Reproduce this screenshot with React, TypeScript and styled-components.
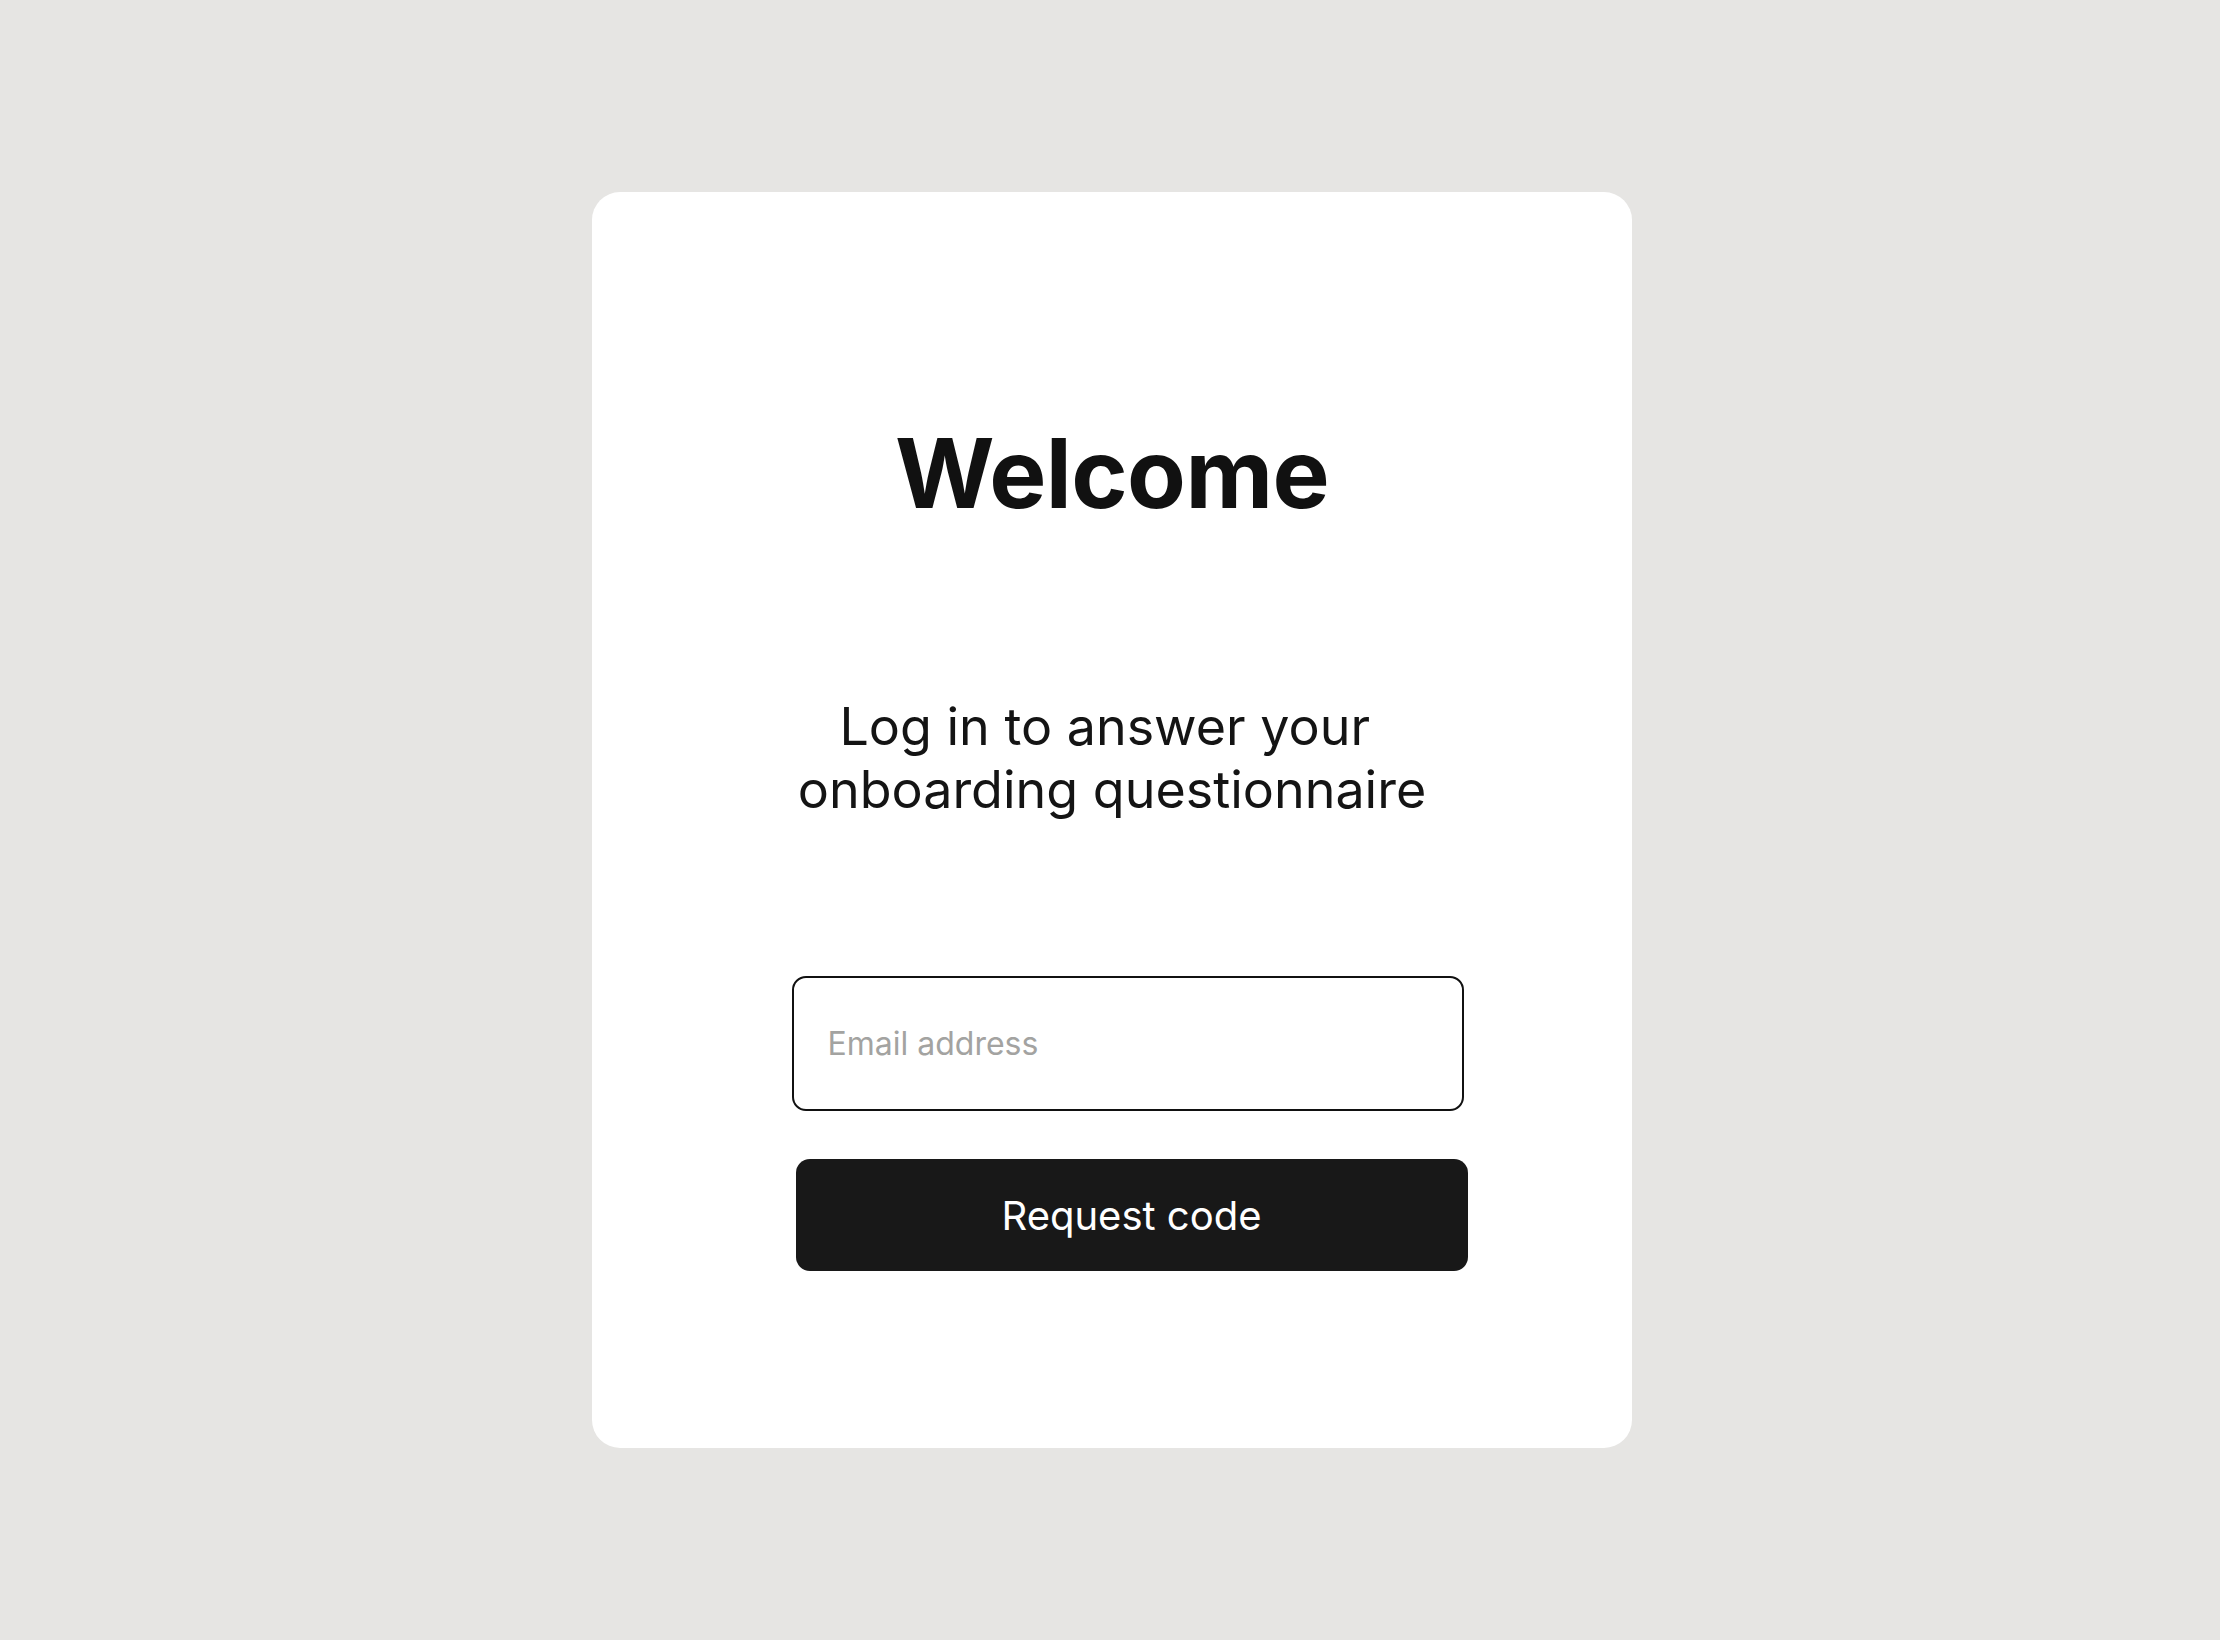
import styled, { createGlobalStyle } from "styled-components";

const GlobalStyle = createGlobalStyle`
    html, body {
        margin: 0;
        padding: 0;
        background: #e6e5e3;
        font-family: Inter, "Noto Sans", "Liberation Sans", sans-serif;
    }
    * {
        box-sizing: border-box;
    }
`;

const Page = styled.div`
    min-height: 100vh;
    display: flex;
    align-items: center;
    justify-content: center;
    background: #e6e5e3;
`;

const Card = styled.div`
    width: 1040px;
    height: 1256px;
    margin-left: 4px;
    background: #fff;
    border-radius: 28px;
    display: flex;
    flex-direction: column;
    align-items: center;
    padding-top: 223px;
`;

const Title = styled.h1`
    margin: 0;
    font-size: 96px;
    font-weight: 700;
    line-height: 116px;
    color: #111;
    letter-spacing: -0.6px;
`;

const SubTitle = styled.p`
    margin: 164px 0 0;
    font-size: 52px;
    font-weight: 400;
    line-height: 63px;
    color: #141414;
    text-align: center;
`;

const Form = styled.form`
    margin-top: 155px;
    margin-left: 35px;
    width: 676px;
    display: flex;
    flex-direction: column;
    gap: 48px;
`;

const EmailInput = styled.input`
    width: 672px;
    height: 135px;
    border: 2px solid #111;
    border-radius: 14px;
    padding: 0 34px;
    font-family: inherit;
    font-size: 32px;
    color: #111;
    background: #fff;
    outline: none;
    &::placeholder {
        color: #a3a3a1;
    }
`;

const SubmitButton = styled.button`
    width: 672px;
    height: 112px;
    margin-left: 4px;
    border: none;
    border-radius: 14px;
    background: #181818;
    color: #fff;
    font-family: inherit;
    font-size: 40px;
    font-weight: 400;
    cursor: pointer;
`;

const App = () => {
    return (
        <>
            <GlobalStyle />
            <Page>
                <Card>
                    <Title>Welcome</Title>
                    <SubTitle>
                        Log in to answer your&nbsp;
                        <br />
                        onboarding questionnaire
                    </SubTitle>
                    <Form onSubmit={(e) => e.preventDefault()}>
                        <EmailInput type="email" placeholder="Email address" />
                        <SubmitButton type="submit">Request code</SubmitButton>
                    </Form>
                </Card>
            </Page>
        </>
    );
};

export default App;
